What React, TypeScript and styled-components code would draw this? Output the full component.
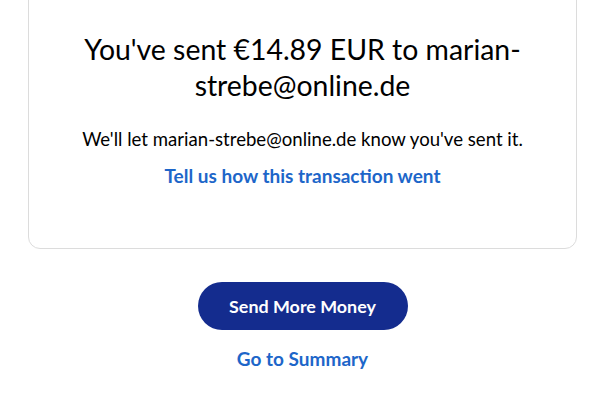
import styled, { createGlobalStyle } from "styled-components";

const GlobalStyle = createGlobalStyle`
  html, body {
    margin: 0;
    padding: 0;
    background: #ffffff;
    font-family: "Lato", "Noto Sans", sans-serif;
    overflow: hidden;
  }
`;

const Page = styled.div`
  box-sizing: border-box;
  display: flex;
  flex-direction: column;
  align-items: center;
  width: 599px;
  padding: 0 22px 0 28px;
`;

const Card = styled.section`
  box-sizing: border-box;
  width: 100%;
  margin-top: -20px;
  padding: 50px 30px 60px;
  border: 1px solid #dcdcdc;
  border-radius: 12px;
  display: flex;
  flex-direction: column;
  align-items: center;
  text-align: center;
`;

const Title = styled.h1`
  margin: 0;
  font-size: 28.4px;
  line-height: 36px;
  font-weight: 400;
  color: #000000;
`;

const Message = styled.p`
  margin: 24px 0 0;
  font-size: 18.6px;
  line-height: 24px;
  color: #000000;
  white-space: nowrap;
`;

const TextLink = styled.a<{ $top: number }>`
  display: inline-block;
  margin-top: ${(p) => p.$top}px;
  font-size: 19px;
  line-height: 24px;
  font-weight: 700;
  color: #1d66c9;
  text-decoration: none;
`;

const Actions = styled.div`
  display: flex;
  flex-direction: column;
  align-items: center;
  margin-top: 33px;
`;

const PrimaryButton = styled.button`
  width: 210px;
  height: 48px;
  border: none;
  border-radius: 24px;
  background: #142c8e;
  color: #ffffff;
  font-family: inherit;
  font-size: 17.9px;
  font-weight: 700;
  cursor: pointer;
`;

export default function App() {
  return (
    <>
      <GlobalStyle />
      <Page>
        <Card>
          <Title>
            You've sent €14.89 EUR to marian-
            <br />
            strebe@online.de
          </Title>
          <Message>We'll let marian-strebe@online.de know you've sent it.</Message>
          <TextLink href="#" $top={13}>
            Tell us how this transaction went
          </TextLink>
        </Card>
        <Actions>
          <PrimaryButton>Send More Money</PrimaryButton>
          <TextLink href="#" $top={17}>
            Go to Summary
          </TextLink>
        </Actions>
      </Page>
    </>
  );
}
